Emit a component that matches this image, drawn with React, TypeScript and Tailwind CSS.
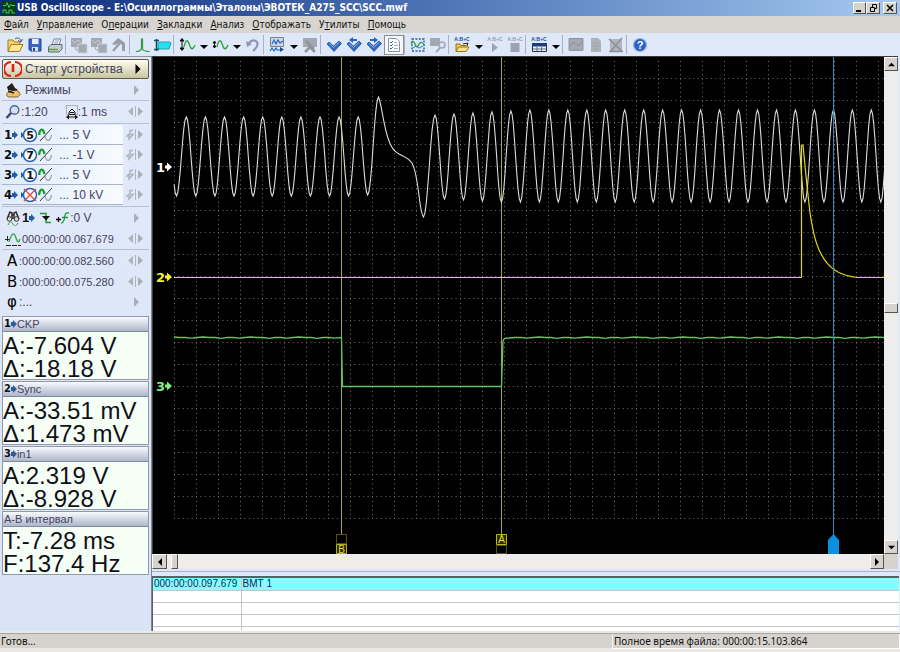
import type { ReactNode } from "react"
import clsx from "clsx"

const menus = [
  ["", "Ф", "айл"],
  ["", "У", "правление"],
  ["О", "п", "ерации"],
  ["", "З", "акладки"],
  ["", "А", "нализ"],
  ["", "О", "тображать"],
  ["У", "т", "илиты"],
  ["", "П", "омощь"],
]

const channels = [
  { id: 1, input: "5", range: "5 V" },
  { id: 2, input: "7", range: "-1 V" },
  { id: 3, input: "1", range: "5 V" },
  { id: 4, input: "", range: "10 kV" },
]

const readouts = [
  { id: "1", title: "CKP", lines: ["A:-7.604 V", "Δ:-18.18 V"] },
  { id: "2", title: "Sync", lines: ["A:-33.51 mV", "Δ:1.473 mV"] },
  { id: "3", title: "in1", lines: ["A:2.319 V", "Δ:-8.928 V"] },
  { id: "", title: "A-B интервал", lines: ["T:-7.28 ms", "F:137.4 Hz"] },
]

const bevel = "border border-t-white border-l-white border-r-[#55534f] border-b-[#55534f] bg-[#d6d3ce]"

// ---------- icons ----------

function Icon({ children, w = 18, h = 18 }: { children: ReactNode; w?: number; h?: number }) {
  return (
    <svg width={w} height={h} viewBox={`0 0 ${w} ${h}`} fill="none" className="block shrink-0">
      {children}
    </svg>
  )
}

const AppIcon = () => (
  <Icon w={14} h={14}>
    <rect width="14" height="14" fill="#063c1c" />
    <path d="M1 4.500h3l1-3 2 5 1.500-3 1.500 1h3M1 12V9h3v3h3V9h3v3h3" stroke="#3fd060" />
  </Icon>
)

const OpenIcon = () => (
  <Icon>
    <path d="M2 15V4h5l1.500 2H14v3" fill="#f6d568" stroke="#a67c1d" />
    <path d="M2 15.500 5 8.500h12l-3.500 7Z" fill="#fbe793" stroke="#a67c1d" />
    <path d="M9 3c3-2 5-1 6 2m1.500-2L15 6l-3-1.500" stroke="#4a5a78" />
  </Icon>
)

const SaveIcon = () => (
  <Icon>
    <path d="M3 3h12v12H4.500L3 13.500Z" fill="#3c62c4" stroke="#27468e" />
    <path d="M6 3h6.500v5H6Z" fill="#e6eefc" />
    <path d="M6 11h6v4H6Z" fill="#dbe4f7" />
    <path d="M7 12h2v3H7Z" fill="#27468e" />
  </Icon>
)

const PrintIcon = () => (
  <Icon>
    <path d="M6 9 8 3h7l-2 6" fill="#fff" stroke="#71809a" />
    <path d="M2.500 11 5 8.500h11V13l-3 3H2.500Z" fill="#c4ccd6" stroke="#5b6a78" />
    <path d="M3 13.500h9" stroke="#6aa51f" strokeWidth="1.500" />
    <path d="M9 5h4M8 7h4" stroke="#7f95bd" />
  </Icon>
)

const CopyGrayIcon = () => (
  <Icon>
    <path d="M1 2h11v9H1Z" fill="#a3a8b1" />
    <path d="m2 4 3 3 3-3 3 3" stroke="#c6cbd5" />
    <path d="M8 8h9v9H8Z" fill="#a3a8b1" stroke="#ccd2dd" />
    <path d="m5 11 1 3h2" stroke="#a3a8b1" />
  </Icon>
)

const HammerIcon = () => (
  <Icon>
    <path d="M2 8 8 2l3 2 4 3v8h-3V9L9 7 5 9Z" fill="#989da6" />
    <path d="m10 7-7 8" stroke="#989da6" strokeWidth="2.200" />
  </Icon>
)

const SpikeIcon = () => (
  <Icon>
    <path d="M2 15.500c3 0 5-1 5.500-3V3l1 0v10c1 2 3 2.500 7 2.500" stroke="#2fa03b" strokeWidth="1.200" />
  </Icon>
)

const MeasureIcon = () => (
  <Icon>
    <path d="M4 6h12l1 1-2 6H4Z" fill="#27e0f2" stroke="#1ca4b6" />
    <path d="M2.500 3v12M0 4.500h5M0 13.500h5" stroke="#164b5f" strokeWidth="1.500" />
  </Icon>
)

const ScaleIcon = ({ tall }: { tall?: boolean }) => (
  <Icon>
    {tall ? (
      <path d="M4 3v11M2 5l2-2.500L6 5ZM2 12l2 2.500L6 12Z" fill="#111" stroke="#111" />
    ) : (
      <path d="M3.500 5v7M2 7l1.500-2L5 7ZM2 10l1.500 2L5 10Z" fill="#111" stroke="#111" />
    )}
    <path d="M6 11C8 2 10 4 11.500 9S15 14 17 9" stroke="#2fa03b" strokeWidth="1.300" />
  </Icon>
)

const UndoIcon = () => (
  <Icon>
    <path d="M5 7c4-5 10-2 8 3-.5 2-2 3-4 5" stroke="#8b9ab5" strokeWidth="2.200" />
    <path d="m2 5 1 6 5-3Z" fill="#8b9ab5" />
  </Icon>
)

const WavePanelIcon = () => (
  <Icon>
    <path d="M2.500 1.500h13v9h-13Z" fill="#cdd6e4" stroke="#7d828c" />
    <path d="m4 8 2-4 2 4 2-4 2 3 3-2M2 15l2-3 2 3 2-3 1 2h4" stroke="#2467c6" strokeWidth="1.200" />
    <path d="m12 11 4 2.500-4 2.500Z" fill="#174da3" />
  </Icon>
)

const GrayCrossIcon = () => (
  <Icon>
    <path d="M2 2h14v9H2Z" fill="#a3a8b1" />
    <path d="m4 16 5-5 5 5M5 5l8 8" stroke="#8e939c" strokeWidth="2.500" />
  </Icon>
)

const CheckIcon = ({ dir }: { dir?: "left" | "right" }) => (
  <Icon>
    <path d="m2 8 2-2 4.500 4L14 5l2.500 2.500L9 15.500Z" fill="#3169bd" stroke="#24549e" strokeWidth=".8" />
    <path d="m4 7.500 4.500 4 5.500-5" stroke="#86b4ee" />
    {dir === "left" && <path d="M4 4 8 1v2h4v2H8v2Z" fill="#2d66ba" />}
    {dir === "right" && <path d="M13 4 9 1v2H5v2h4v2Z" fill="#2d66ba" />}
  </Icon>
)

const ListIcon = () => (
  <Icon>
    <path d="M3.500 2.500h8l3 3v10h-11Z" fill="#fff" stroke="#8b93a3" />
    <path d="m5 6 1 1 2-2M5 9l1 1 2-2M5 12l1 1 2-2" stroke="#3d6bb5" />
    <path d="M9 6.500h3M9 9.500h4M9 12.500h4" stroke="#a4a9b2" />
  </Icon>
)

const SelectWaveIcon = () => (
  <Icon>
    <path d="M3 3h12v12H3Z" stroke="#2c5a9c" strokeWidth="1.400" strokeDasharray="2 1.400" />
    <path d="M2 8c2-3 3-3 4 0s2 4 3.500 1S13 5 15 9" stroke="#2fa03b" strokeWidth="1.300" />
    <path d="m4 12 3-2 3 2 4-2" stroke="#3e72c4" />
  </Icon>
)

const SearchGrayIcon = () => (
  <Icon>
    <path d="M1 2h10v8H1Z" fill="#a3a8b1" />
    <circle cx="13" cy="9" r="3" fill="#dfe8f8" stroke="#a3a8b1" strokeWidth="1.600" />
    <path d="m11 12-4 4" stroke="#a3a8b1" strokeWidth="2" />
  </Icon>
)

const Abc = ({ color }: { color: string }) => (
  <text x="9" y="5" fontSize="5" fontWeight="700" fontFamily="Liberation Sans, sans-serif" textAnchor="middle" fill={color}>
    A:B+C
  </text>
)

const AbcOpenIcon = () => (
  <Icon>
    <Abc color="#2a4b98" />
    <path d="M3 15V8h4l1 1.500h5V11" fill="#f2cb55" stroke="#9b7318" />
    <path d="m3 15.500 2.500-4.500H16l-3 4.500Z" fill="#fbe48c" stroke="#9b7318" />
    <path d="m10 8 5-1-1 3" stroke="#222" />
  </Icon>
)

const AbcPlayIcon = () => (
  <Icon>
    <Abc color="#9aa0ac" />
    <path d="m6 7 6 4.500L6 16Z" fill="#9ea4af" />
  </Icon>
)

const AbcStopIcon = () => (
  <Icon>
    <Abc color="#9aa0ac" />
    <path d="M4.500 7h9v9h-9Z" fill="#9ea4af" />
  </Icon>
)

const AbcTableIcon = () => (
  <Icon>
    <Abc color="#2a4b98" />
    <path d="M2.500 7.500h14v8h-14Z" fill="#eef3fb" stroke="#27303f" />
    <path d="M2 7h15v3.500H2Z" fill="#1f3d78" />
    <path d="M3 13h13M7 11v4M11.500 11v4" stroke="#5e6b80" />
  </Icon>
)

const GrayPictureIcon = () => (
  <Icon>
    <path d="M2 2.500h14v12H2Z" fill="#a3a8b1" stroke="#8f949e" />
    <path d="m3 10 4-4 4 4 4-4" stroke="#868b95" />
  </Icon>
)

const GrayPageIcon = () => (
  <Icon>
    <path d="M4 2h7l3 3v11H4Z" fill="#adb2bb" />
    <path d="M6 7h4M6 10h6M6 13h6" stroke="#9ca1ab" />
  </Icon>
)

const GrayPageXIcon = () => (
  <Icon>
    <path d="M3 3h12v12H3Z" fill="#b1b6bf" />
    <path d="m2 3 13 12M15 2 3 16M2 15.500h14" stroke="#8b9099" strokeWidth="1.500" />
  </Icon>
)

const HelpIcon = () => (
  <Icon>
    <circle cx="9" cy="9" r="6.500" fill="#2c62c4" stroke="#9db4dc" strokeWidth="1.200" />
    <text x="9" y="13" fontSize="11" fontWeight="700" fontFamily="Liberation Sans, sans-serif" textAnchor="middle" fill="#fff">
      ?
    </text>
  </Icon>
)

const PowerIcon = () => (
  <Icon>
    <path d="M7 2a7 7 0 0 0 0 14M11 2a7 7 0 0 1 0 14" stroke="#e01c1c" strokeWidth="2" />
    <path d="M9 4v8" stroke="#e01c1c" strokeWidth="2.600" />
  </Icon>
)

const WizardIcon = () => (
  <Icon>
    <path d="M3 15c-1-2 0-4 3-4l4-3 5 3c2 2 1 4-2 5H5Z" fill="#eec268" stroke="#8a6423" />
    <path d="m3 6 5-4 3 5 3 2-4 1-6-1Z" fill="#23201c" />
    <path d="m4 10 6 2" stroke="#23201c" strokeWidth="1.500" />
  </Icon>
)

const LensIcon = () => (
  <Icon w={16} h={16}>
    <circle cx="9.500" cy="6" r="4.300" fill="#cfe2fb" stroke="#57677f" strokeWidth="1.500" />
    <path d="m6 9-4.500 5" stroke="#3d4c62" strokeWidth="2.500" />
  </Icon>
)

const TimebaseIcon = () => (
  <Icon w={12} h={16}>
    <path d="M.5 1.500h11v9H.5Z" stroke="#777" strokeDasharray="1 1" />
    <path d="m6 5-3 3v2.500h6V8ZM4 8.500h4M1 13h10" stroke="#111" />
    <path d="m0 13 3-2.500v5ZM12 13l-3-2.500v5Z" fill="#111" />
  </Icon>
)

const WaveSlashIcon = () => (
  <Icon w={16} h={16}>
    <path d="M1 8c1-7 4-7 5.500-1" stroke="#1c9a34" strokeWidth="2.400" />
    <path d="M7 9c1.500 6 5 6 6.500-1" stroke="#9aa3af" strokeWidth="1.200" />
    <path d="M2 14 14 1" stroke="#333" />
  </Icon>
)

const BlueArrow = () => (
  <svg width="6" height="8" viewBox="0 0 6 8" className="block shrink-0">
    <path d="M0 2h2V0l4 4-4 4V6H0Z" fill="#2c5a9c" />
  </svg>
)

const InputBadge = ({ label }: { label: string }) => (
  <Icon w={17} h={16}>
    <path d="M0 5v6l3.500-3Z" fill="#2560b0" />
    <circle cx="9" cy="8" r="6.500" fill="#fff" stroke="#2c62ae" strokeWidth="1.500" />
    {label ? (
      <text x="9" y="12" fontSize="11" fontWeight="700" fontFamily="DejaVu Sans, sans-serif" textAnchor="middle" fill="#111">
        {label}
      </text>
    ) : (
      <path d="m3 2 12 12M15 2 3 14" stroke="#e0443a" strokeWidth="1.400" />
    )}
  </Icon>
)

const BinocularsIcon = () => (
  <Icon w={14} h={16}>
    <path d="M1 9 4 2l2 1v6M13 9l-3-7-2 1v6M6 5h2" stroke="#333" strokeWidth="1.600" />
    <circle cx="3.500" cy="9" r="2.300" fill="#ddd" stroke="#333" />
    <circle cx="10.500" cy="9" r="2.300" fill="#ddd" stroke="#333" />
    <path d="M2 15c2-4 3-4 5-1s3 2 5-1" stroke="#2fa03b" />
  </Icon>
)

const EdgeIcon = () => (
  <Icon w={12} h={14}>
    <path d="M0 2.500h6v9h5" stroke="#1c9a34" strokeWidth="1.400" />
    <path d="M2 5h8l-4 4.500Z" fill="#111" />
  </Icon>
)

const LevelIcon = () => (
  <Icon w={14} h={14}>
    <path d="M0 8.500h5M2.500 6v5" stroke="#111" strokeWidth="1.300" />
    <path d="M13 2c-4-1-4 2-4.500 5S7 12 5 12M6 6.500h6" stroke="#1c9a34" strokeWidth="1.300" />
  </Icon>
)

const OffsetIcon = () => (
  <Icon w={17} h={16}>
    <path d="M0 8.500h5M2.500 5v6M1 14.500h15" stroke="#222" strokeDasharray="5 1" />
    <path d="M4 11C7 1 9 1 11 7s3 4 4 1" stroke="#2fa03b" strokeWidth="1.300" />
  </Icon>
)

const Triangle = ({ dir, className }: { dir: "up" | "down" | "left" | "right"; className?: string }) => {
  const paths = {
    up: "M4 2 8 6H0Z",
    down: "M4 6 0 2h8Z",
    left: "M2 4 6 0v8Z",
    right: "M6 4 2 0v8Z",
  }
  return (
    <svg viewBox="0 0 8 8" className={clsx("block shrink-0 fill-current", className)}>
      <path d={paths[dir]} />
    </svg>
  )
}

function Stepper({ kind, label }: { kind: "both" | "next" | "bolt"; label: string }) {
  return (
    <button aria-label={label} className="flex w-6 shrink-0 justify-center">
      <svg width="18" height="12" viewBox="0 0 18 12" className="block">
        {kind === "both" && <path d="M7 1v9L2 5.500Z" fill="#b0b4bd" />}
        {kind === "bolt" && <path d="M7 1.500H4v4h3L3 10V7H1l2-2" stroke="#b0b4bd" strokeWidth="1.500" fill="none" />}
        {kind !== "next" && <path d="M9 0h1v11H9Z" fill="#b0b4bd" />}
        <path d={kind === "next" ? "M8 1v10l5-5Z" : "M12 1v9l5-4.500Z"} fill="#a9adb6" />
      </svg>
    </button>
  )
}

// ---------- toolbar ----------

function Tool({ label, pressed, children }: { label: string; pressed?: boolean; children: ReactNode }) {
  return (
    <button
      aria-label={label}
      className={clsx(
        "flex h-5 w-5 shrink-0 items-center justify-center",
        pressed && "border border-[#8a8f99] bg-[#f7f7f7]",
      )}
    >
      {children}
    </button>
  )
}

const Drop = ({ label }: { label: string }) => (
  <button aria-label={label} className="flex w-[13px] shrink-0 items-center justify-center pt-1">
    <Triangle dir="down" className="h-2 w-2 text-black" />
  </button>
)

const Sep = () => <div className="mr-[3px] h-[19px] w-px shrink-0 bg-[#aab2c2]" />

function Toolbar() {
  return (
    <div className="flex h-[23px] items-center overflow-hidden bg-[#dfe8f8] pl-[5px]">
      <Tool label="Открыть"><OpenIcon /></Tool>
      <Tool label="Сохранить"><SaveIcon /></Tool>
      <Tool label="Печать"><PrintIcon /></Tool>
      <Sep />
      <Tool label="Копировать"><CopyGrayIcon /></Tool>
      <Tool label="Вставить"><CopyGrayIcon /></Tool>
      <Tool label="Обработка"><HammerIcon /></Tool>
      <Sep />
      <Tool label="Импульс"><SpikeIcon /></Tool>
      <Tool label="Измерение"><MeasureIcon /></Tool>
      <Sep />
      <Tool label="Масштаб"><ScaleIcon tall /></Tool>
      <Drop label="Выбор масштаба" />
      <Tool label="Смещение"><ScaleIcon /></Tool>
      <Drop label="Выбор смещения" />
      <Tool label="Отменить"><UndoIcon /></Tool>
      <Sep />
      <Tool label="Панели"><WavePanelIcon /></Tool>
      <Drop label="Выбор панели" />
      <Tool label="Удалить панель"><GrayCrossIcon /></Tool>
      <Sep />
      <Tool label="Закладка"><CheckIcon /></Tool>
      <Tool label="Предыдущая закладка"><CheckIcon dir="left" /></Tool>
      <Tool label="Следующая закладка"><CheckIcon dir="right" /></Tool>
      <Tool label="Список закладок" pressed><ListIcon /></Tool>
      <Sep />
      <Tool label="Выделить"><SelectWaveIcon /></Tool>
      <Tool label="Найти"><SearchGrayIcon /></Tool>
      <Sep />
      <Tool label="Открыть скрипт"><AbcOpenIcon /></Tool>
      <Drop label="Выбор скрипта" />
      <Tool label="Запустить скрипт"><AbcPlayIcon /></Tool>
      <Tool label="Остановить скрипт"><AbcStopIcon /></Tool>
      <Sep />
      <Tool label="Таблица"><AbcTableIcon /></Tool>
      <Drop label="Выбор таблицы" />
      <Sep />
      <Tool label="График"><GrayPictureIcon /></Tool>
      <Tool label="Отчёт"><GrayPageIcon /></Tool>
      <Tool label="Закрыть отчёт"><GrayPageXIcon /></Tool>
      <Sep />
      <Tool label="Справка"><HelpIcon /></Tool>
    </div>
  )
}

// ---------- side panel ----------

function Sidebar() {
  return (
    <aside className="flex w-[151px] shrink-0 flex-col border-t border-[#8d94a4] bg-linear-to-b from-[#e2eafa] to-[#d9e4f6] px-[2px] pt-[2px] text-[12px] leading-[20px] text-[#46425f]">
      <button className="flex h-5 items-center rounded-xs border border-[#5c5a48] bg-linear-to-b from-[#fffef0] to-[#c9c5a0] px-px">
        <PowerIcon />
        <span className="ml-[3px] flex-1 text-left">Старт устройства</span>
        <Triangle dir="right" className="mr-1 h-2.5 w-2.5 text-black" />
      </button>
      <div className="flex h-[22px] items-center border-b border-[#b9c2d4] px-[2px]">
        <WizardIcon />
        <button className="ml-[3px] flex-1 text-left">Режимы</button>
        <Stepper kind="next" label="Открыть режимы" />
      </div>
      <div className="flex h-[23px] items-center border-b border-[#b9c2d4] pl-[3px] pr-[2px]">
        <LensIcon />
        <span className="flex-1">:1:20</span>
        <TimebaseIcon />
        <span className="mr-4">:1 ms</span>
        <Stepper kind="both" label="Развёртка" />
      </div>
      <div className="border-b border-[#b9c2d4] pb-px pt-px">
        {channels.map((ch) => (
          <div key={ch.id} className="flex h-5 items-center pr-[2px]">
            <div className="flex h-5 w-[121px] items-center border-b border-[#a9b4c8] bg-linear-to-r from-[#dfecfb] to-[#f7fbff] pl-[2px]">
              <span className="font-['DejaVu_Sans_Condensed'] text-[13px] font-bold text-[#111]">{ch.id}</span>
              <BlueArrow />
              <span className="ml-[3px] flex">
                <InputBadge label={ch.input} />
                <WaveSlashIcon />
              </span>
              <span className="ml-[5px]">... {ch.range}</span>
            </div>
            <div className="ml-auto">
              <Stepper kind="bolt" label={`Диапазон канала ${ch.id}`} />
            </div>
          </div>
        ))}
      </div>
      <div className="flex h-[22px] items-center pl-[4px] pr-[2px]">
        <BinocularsIcon />
        <span className="ml-[2px] text-[13px] font-bold text-[#111]">1</span>
        <BlueArrow />
        <span className="ml-[5px]"><EdgeIcon /></span>
        <span className="ml-1"><LevelIcon /></span>
        <span className="flex-1">:0 V</span>
        <Stepper kind="next" label="Уровень" />
      </div>
      <div className="flex h-[21px] items-center border-b border-[#b9c2d4] pl-[3px] pr-[2px]">
        <OffsetIcon />
        <span className="flex-1 text-[11px]">000:00:00.067.679</span>
        <Stepper kind="both" label="Позиция" />
      </div>
      <div className="flex h-[22px] items-center pl-[5px] pr-[2px]">
        <b className="w-[12px] font-['DejaVu_Sans'] text-[15px] font-normal text-black">A</b>
        <span className="flex-1 text-[11px]">:000:00:00.082.560</span>
        <Stepper kind="both" label="Курсор A" />
      </div>
      <div className="flex h-5 items-center pl-[5px] pr-[2px]">
        <b className="w-[12px] font-['DejaVu_Sans'] text-[15px] font-normal text-black">B</b>
        <span className="flex-1 text-[11px]">:000:00:00.075.280</span>
        <Stepper kind="both" label="Курсор B" />
      </div>
      <div className="flex h-5 items-center pl-[5px] pr-[2px]">
        <b className="w-[12px] font-['DejaVu_Sans'] text-[15px] font-normal text-black">φ</b>
        <span className="flex-1">:...</span>
        <Stepper kind="next" label="Фаза" />
      </div>
      <div className="mt-1">
        {readouts.map((r) => (
          <section key={r.title} className="mb-px h-16 border border-[#8f97a8] bg-[#f6fff6]">
            <h2 className="flex h-[15px] items-center border-b border-[#8089a0] bg-linear-to-b from-[#f8fafd] to-[#aeb7cb] pl-px text-[11px] leading-[14px]">
              {r.id && (
                <>
                  <span className="font-['DejaVu_Sans_Condensed'] font-bold text-[#111]">{r.id}</span>
                  <BlueArrow />
                </>
              )}
              {r.title}
            </h2>
            {r.lines.map((line) => (
              <p key={line} className="h-[23px] whitespace-nowrap text-[24px] leading-[28px] text-[#101018]">
                {line}
              </p>
            ))}
          </section>
        ))}
      </div>
    </aside>
  )
}

// ---------- plot ----------

const W = 731
const H = 497

type Point = [number, number]

// extrema of the crank sensor signal, joined with half cosines
function crankPath() {
  const before: Point[] = [[14, 59], [23.5, 139]]
  for (let i = 0; i < 10; i++) {
    before.push([33.3 + i * 19.1, 60], [42.8 + i * 19.1, 139])
  }
  before[before.length - 1] = [214.7, 138]
  before.push([225.5, 40])

  const after: Point[] = [[270.5, 160]]
  for (let i = 0; i < 24; i++) {
    after.push([282 + i * 18.97, Math.max(53, 58 - i)], [291.5 + i * 18.97, Math.min(145, 142 + i)])
  }
  after.push([737, 53])

  const join = (pts: Point[]) => {
    const out: string[] = []
    for (let i = 0; i < pts.length - 1; i++) {
      const [x0, y0] = pts[i]
      const [x1, y1] = pts[i + 1]
      for (let k = 0; k <= 8; k++) {
        const x = x0 + ((x1 - x0) * k) / 8
        const y = y0 + ((y1 - y0) * (1 - Math.cos((Math.PI * k) / 8))) / 2
        if (x >= 21) out.push(`${x.toFixed(1)} ${y.toFixed(1)}`)
      }
    }
    return out.join("L")
  }
  return `M${join(before)}C229 48 230 68 236 84C242 101 252 96 259 106C266 118 266 156 270.5 160L${join(after)}`
}

function greenPath() {
  const noise = (from: number, to: number) => {
    let d = ""
    for (let x = from, i = 0; x < to; x += 6, i++) d += `L${x} ${280.5 + [0, 0, 0.6, 0, -0.5, 0, 0, 0.8][i % 8]}`
    return d
  }
  return `M21 280${noise(26, 188)}L188.500 280.500L189.500 329.500H348.500L350 284C351 281 352 281 356 281${noise(362, 728)}L731 280.500`
}

const verticals = Array.from({ length: 33 }, (_, i) => 21.5 + i * 22)
const horizontals = Array.from({ length: 21 }, (_, i) => 21.5 + i * 22)

const traceLabels = [
  { id: "1", y: 110, color: "#ffffff" },
  { id: "2", y: 220, color: "#f4f02a" },
  { id: "3", y: 329, color: "#7cf07c" },
]

function Plot() {
  return (
    <svg viewBox={`0 0 ${W} ${H}`} className="block h-auto w-full bg-black" fill="none">
      <g stroke="#747474" strokeDasharray="1 3.4">
        {verticals.map((x) => (
          <path key={x} d={`M${x} 4V461`} />
        ))}
        {horizontals.map((y) => (
          <path key={y} d={`M21 ${y}H${W}`} />
        ))}
      </g>
      <path d="M188.500 0V477M348.500 0V477" stroke="#a8a64a" />
      <path d={crankPath()} stroke="#dcdcdc" strokeWidth="1.100" />
      <path d="M21 220.500H648.500V88H650C652 110 654 130 657 156C661 182 665 195 674 206C681 215 690 219 704 220.500H731" stroke="#e2da10" strokeWidth="1.200" />
      <path d={greenPath()} stroke="#62c462" strokeWidth="1.300" />
      <path d="M680.500 0V480" stroke="#3289bd" />
      <path d="M675 497V483l5.500-6 5.500 6v14Z" fill="#0d8fe0" />

      <path d="M183.500 477.500h10v9h-10ZM343.500 488.500h10v8h-10Z" stroke="#a8a32b" strokeDasharray="1 1" />
      <path d="M183.500 487.500h10v9h-10ZM343.500 477.500h10v10h-10Z" stroke="#b8b31c" fill="#2a2900" />
      <g fontFamily="Liberation Sans, sans-serif" fontSize="10" textAnchor="middle" fill="#e2dc20">
        <text x="188.500" y="496">B</text>
        <text x="348.500" y="486">A</text>
      </g>

      <g fontFamily="DejaVu Sans, sans-serif" fontSize="13" fontWeight="700">
        {traceLabels.map((t) => (
          <g key={t.id} fill={t.color}>
            <text x="3" y={t.y + 5}>{t.id}</text>
            <path d={`M12 ${t.y - 1.5}h2v-3l5 4.500-5 4.500v-3h-2Z`} />
          </g>
        ))}
      </g>
    </svg>
  )
}

const track = "bg-[#efedeb]"

function Workspace() {
  return (
    <main className="flex min-w-0 flex-1 flex-col border-l border-[#7b8698] bg-[#dfe8f8]">
      <div className="mr-[2px] flex border-l border-t border-[#3c3c3c]">
        <div className="min-w-0 flex-1">
          <Plot />
        </div>
        <div className={clsx("flex w-[14px] flex-col", track)}>
          <button aria-label="Вверх" className={clsx("flex h-[14px] items-center justify-center", bevel)}>
            <Triangle dir="up" className="h-[7px] w-[7px] text-black" />
          </button>
          <div className="flex-1" />
          <div className={clsx("mt-1 h-[10px]", bevel)} />
          <div className="flex-1" />
          <button aria-label="Вниз" className={clsx("flex h-[14px] items-center justify-center", bevel)}>
            <Triangle dir="down" className="h-[7px] w-[7px] text-black" />
          </button>
        </div>
      </div>
      <div className={clsx("mr-[2px] flex h-[15px]", track)}>
        <button aria-label="Влево" className={clsx("flex w-[15px] items-center justify-center", bevel)}>
          <Triangle dir="left" className="h-[8px] w-[8px] text-black" />
        </button>
        <div className={clsx("ml-1 w-[7px]", bevel)} />
        <div className="flex-1" />
        <button aria-label="Вправо" className={clsx("flex w-[14px] items-center justify-center", bevel)}>
          <Triangle dir="right" className="h-[8px] w-[8px] text-black" />
        </button>
        <div className="w-[14px] bg-[#d6d3ce]" />
      </div>
      <div className="mt-[2px] h-px bg-[#a7b3c8]" />
      <div className="mr-px mt-1 flex-1 border-l border-t-2 border-[#5a5f68] bg-white">
        <table className="w-full table-fixed border-collapse text-left text-[10px] leading-[11px]">
          <tbody>
            <tr className="h-3 bg-[#84ffff] text-[#0b2a5c]">
              <td className="w-[88px] border-b border-r border-[#c6c6c6] py-0 pl-px">000:00:00.097.679</td>
              <td className="border-b border-[#c6c6c6] py-0 pl-px">ВМТ 1</td>
            </tr>
            {[0, 1, 2, 3].map((i) => (
              <tr key={i} className={i < 3 ? "h-3" : "h-1"}>
                <td className={clsx("border-r border-[#c6c6c6] p-0", i < 3 && "border-b")} />
                <td className={clsx("border-[#c6c6c6] p-0", i < 3 && "border-b")} />
              </tr>
            ))}
          </tbody>
        </table>
      </div>
    </main>
  )
}

export default function App() {
  return (
    <div className="flex min-h-screen flex-col bg-[#e9e8e5] font-['Liberation_Sans',sans-serif]">
      <header className="flex h-4 items-center bg-linear-to-r from-[#0d2a78] via-[#5076b8] to-[#a6caf0] pl-[2px] pr-[3px]">
        <AppIcon />
        <h1 className="flex-1 truncate pl-[1px] font-['DejaVu_Sans_Condensed'] text-[10px] font-bold leading-4 text-white">
          USB Oscilloscope - E:\Осциллограммы\Эталоны\ЭВОТЕК_A275_SCC\SCC.mwf
        </h1>
        <button aria-label="Свернуть" className={clsx("flex h-3 w-[13px] items-center justify-center", bevel)}>
          <svg width="9" height="8" viewBox="0 0 9 8"><path d="M1 6h5v2H1Z" /></svg>
        </button>
        <button aria-label="Восстановить" className={clsx("mr-[3px] flex h-3 w-[14px] items-center justify-center", bevel)}>
          <svg width="9" height="8" viewBox="0 0 9 8" fill="none"><path d="M3.500 3V.5h4v4H6M1.500 3.500h4v4h-4Z" stroke="#000" /></svg>
        </button>
        <button aria-label="Закрыть" className={clsx("flex h-3 w-[14px] items-center justify-center", bevel)}>
          <svg width="8" height="8" viewBox="0 0 8 8"><path d="m1 1 6 6M7 1 1 7" stroke="#000" strokeWidth="1.500" /></svg>
        </button>
      </header>
      <nav className="flex h-[17px] items-center gap-2 bg-[#d8d5d0] pl-1 font-['DejaVu_Sans_Condensed'] text-[10px] leading-[17px] text-[#111]">
        {menus.map(([pre, key, rest]) => (
          <button key={key + rest} className="whitespace-nowrap">
            {pre}<u>{key}</u>{rest}
          </button>
        ))}
      </nav>
      <Toolbar />
      <div className="flex flex-1">
        <Sidebar />
        <Workspace />
      </div>
      <footer className="mb-1 mt-[2px] flex h-[15px] items-center border-t border-[#a9a7a3] bg-[#d6d3ce] font-['Noto_Sans'] text-[10px] leading-[14px] text-[#111]">
        <span className="flex-1 pl-px">Готов...</span>
        <span className="w-[32%] border-b border-l border-r border-b-white border-l-[#f5f4f2] border-r-white pl-px">
          Полное время файла: 000:00:15.103.864
        </span>
      </footer>
    </div>
  )
}
